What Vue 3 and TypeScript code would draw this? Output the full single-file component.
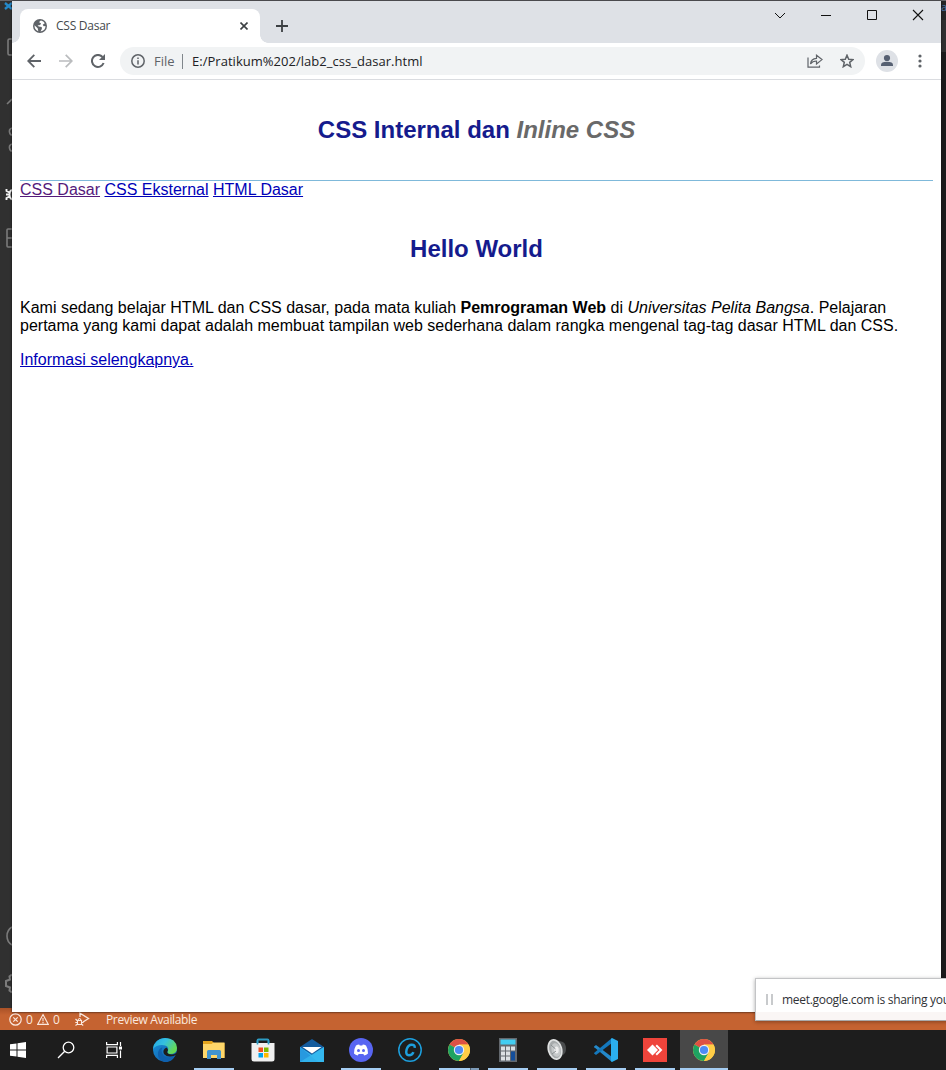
<script setup lang="ts">
interface Task {
  name: string
  state?: 'open' | 'stacked' | 'active'
}

const tasks: Task[] = [
  { name: 'edge' },
  { name: 'files', state: 'open' },
  { name: 'store' },
  { name: 'mail' },
  { name: 'discord', state: 'open' },
  { name: 'circle-c' },
  { name: 'chrome', state: 'stacked' },
  { name: 'calculator', state: 'open' },
  { name: 'speaker', state: 'open' },
  { name: 'vscode', state: 'open' },
  { name: 'anydesk', state: 'open' },
  { name: 'chrome', state: 'active' },
]
</script>

<template>
  <div class="desktop">
    <div class="editor">
      <svg class="activity" width="12" height="1008" viewBox="0 0 12 1008" fill="none" stroke="#7b7b7b" stroke-width="1.6">
        <path d="M5 2l7 6M5 8l7-6" stroke="#2489ca" stroke-width="2.4" />
        <path d="M12 38H9.500Q8 38 8 39.500V52.500Q8 54 9.500 54H12" />
        <path d="M7 103l5-5" />
        <path d="M12 127q-3 1-2.500 4q.5 3 2.500 3M12 143q-3 1-2.500 4q.5 3 2.500 3" />
        <path d="M12 189q-2.500 1-2.500 4.500t2.500 5M6.500 188v2l3 1.500M6 193.500h3.500M6.500 199v-2l3-1.500" stroke="#f2f2f2" stroke-width="1.900" />
        <path d="M12 228H8Q7 228 7 229V245Q7 246 8 246H12M7 237h5" />
        <path d="M12 926q-5 3-5 9t5 9" />
        <path d="M12 973.500l-2.500 2 .5 3-4 1.500v5l4 1.500-.5 3 2.500 2" stroke-width="2" />
      </svg>
      <div class="edge-strip"><span>at</span></div>
      <div class="status">
        <svg width="13" height="13" viewBox="0 0 13 13" fill="none" stroke="currentColor" stroke-width="1.2">
          <circle cx="6.500" cy="6.500" r="5.700" /><path d="M4.300 4.300l4.400 4.400M8.700 4.300l-4.400 4.400" />
        </svg>
        <span class="zero">0</span>
        <svg class="warn" width="12" height="13" viewBox="0 0 13 13" fill="none" stroke="currentColor" stroke-width="1.200">
          <path d="M6.500 1.200L12.300 11.800H.7ZM6.500 4.800v3.600M6.500 9.300v1.200" />
        </svg>
        <span class="zero">0</span>
        <svg class="debug" width="15" height="14" viewBox="0 0 15 14" fill="none" stroke="currentColor" stroke-width="1.300">
          <path d="M5 5V1.200L13.500 6.500 8 10" />
          <path d="M2.500 8.500h4v4h-4ZM.5 7l2 2M.3 10.500h2.200M.5 13.500l2-1.500M6.500 10.500h2M6.500 12l1.700 1.500M3 8q1.500-3 3 0" stroke-width="1.100" />
        </svg>
        <span class="preview">Preview Available</span>
      </div>
    </div>

    <main class="window">
      <div class="tabstrip">
        <div class="tab">
          <svg class="globe" width="14" height="14" viewBox="0 0 14 14">
            <circle cx="7" cy="7" r="7" fill="#5f6368" />
            <path d="M8 1.400Q6.200 2 6.300 3.500L8 4.300 7.200 6 4.500 6.400 5.800 7.600 8.700 8 8.900 9.700 7.500 12.500Q12.500 11.700 12.500 7L10.700 7.300 9.700 5.800 11.800 4.300Q10.700 2 8 1.400ZM1.500 6.300L4.700 9.300 5.300 12.200Q1.300 10.600 1.500 6.300Z" fill="#fff" />
          </svg>
          <span class="tab-title">CSS Dasar</span>
          <svg class="tab-close" width="8" height="8" viewBox="0 0 8 8" stroke="#3c4043" stroke-width="1.600"><path d="M.5.5l7 7M7.500.5l-7 7" /></svg>
        </div>
        <svg class="plus" width="12" height="12" viewBox="0 0 12 12" stroke="#3c4043" stroke-width="1.800"><path d="M6 0v12M0 6h12" /></svg>
        <div class="controls">
          <svg width="46" height="28" viewBox="0 0 46 28" fill="none" stroke="#111"><path d="M18 12l5 5 5-5" /></svg>
          <svg width="46" height="28" viewBox="0 0 46 28" fill="none" stroke="#111"><path d="M18 14.500h10" /></svg>
          <svg width="46" height="28" viewBox="0 0 46 28" fill="none" stroke="#111"><path d="M18.500 9.500h9v9h-9z" /></svg>
          <svg width="46" height="28" viewBox="0 0 46 28" fill="none" stroke="#111" stroke-width="1.100"><path d="M18 9l10 10M28 9L18 19" /></svg>
        </div>
      </div>

      <div class="toolbar">
        <svg class="back" width="14" height="14" viewBox="0 0 14 14" fill="none" stroke="#5f6368" stroke-width="1.800"><path d="M14 7H1.500M7.300.8L1.200 7l6.100 6.200" /></svg>
        <svg class="forward" width="14" height="14" viewBox="0 0 14 14" fill="none" stroke="#babcbe" stroke-width="1.700"><path d="M0 7h12.500M6.700.8L12.800 7l-6.100 6.200" /></svg>
        <svg class="reload" width="14" height="14" viewBox="0 0 14 14"><path d="M12.600 9A6 6 0 1 1 11.500 3" fill="none" stroke="#5f6368" stroke-width="2" /><path d="M14 0v6H8z" fill="#5f6368" /></svg>
        <div class="omnibox">
          <svg class="info" width="14" height="14" viewBox="0 0 14 14" fill="none" stroke="#5f6368" stroke-width="1.500"><circle cx="7" cy="7" r="6.200" /><path d="M7 6.200v4.200M7 3.400v1.500" /></svg>
          <span class="scheme">File</span>
          <span class="url">E:/Pratikum%202/lab2_css_dasar.html</span>
          <svg class="share" width="16" height="14" viewBox="0 0 16 14" fill="none" stroke="#5f6368" stroke-width="1.200"><path d="M1 3.500V13.200H12.500V11.500M3.500 10Q4 4.500 9.500 4.300V1.200L15 5.600 9.500 10V7Q5.500 7 3.500 10Z" /></svg>
          <svg class="star" width="14" height="14" viewBox="0 0 14 14" fill="none" stroke="#5f6368" stroke-width="1.500"><path d="M7 1.200L8.700 5.200 13 5.600 9.700 8.400 10.700 12.700 7 10.400 3.300 12.700 4.300 8.400 1 5.600 5.300 5.200Z" /></svg>
        </div>
        <svg class="profile" width="22" height="22" viewBox="0 0 22 22"><circle cx="11" cy="11" r="11" fill="#dee1e6" /><circle cx="11" cy="8" r="3.100" fill="#566072" /><path d="M5 16v-1.200Q5 11.800 11 11.800T17 14.800V16Z" fill="#566072" /></svg>
        <svg class="menu" width="4" height="14" viewBox="0 0 4 14" fill="#5f6368"><circle cx="2" cy="2" r="1.600" /><circle cx="2" cy="7" r="1.600" /><circle cx="2" cy="12" r="1.600" /></svg>
      </div>

      <article class="page">
        <header><h1>CSS Internal dan <i>Inline CSS</i></h1></header>
        <nav><a class="visited">CSS Dasar</a> <a>CSS Eksternal</a> <a>HTML Dasar</a></nav>
        <h2>Hello World</h2>
        <p>Kami sedang belajar HTML dan CSS dasar, pada mata kuliah <b>Pemrograman Web</b> di <i>Universitas Pelita Bangsa</i>. Pelajaran<br>pertama yang kami dapat adalah membuat tampilan web sederhana dalam rangka mengenal tag-tag dasar HTML dan CSS.</p>
        <a>Informasi selengkapnya.</a>
      </article>
    </main>

    <div class="sharing">
      <span class="grip"></span>
      <span class="sharing-text">meet.google.com is sharing you</span>
    </div>

    <footer class="taskbar">
      <div class="system">
        <svg width="16" height="16" viewBox="0 0 16 16" fill="#fff"><path d="M0 2.300L6.500 1.400V7.500H0ZM7.500 1.200L16 0V7.500H7.500ZM0 8.500H6.500V14.600L0 13.700ZM7.500 8.500H16V16L7.500 14.800Z" /></svg>
      </div>
      <div class="system">
        <svg width="18" height="18" viewBox="0 0 18 18" fill="none" stroke="#fff" stroke-width="1.300"><circle cx="11.500" cy="6.500" r="5.300" /><path d="M7.700 10.300L1 17" /></svg>
      </div>
      <div class="system">
        <svg width="16" height="16" viewBox="0 0 16 16" fill="none" stroke="#fff" stroke-width="1.200"><path d="M.6 0v2.600h10.800V0M.6 16v-2.600h10.800V16M1.100 5h9.800v6H1.100zM14.500 0v4M14.500 8.500V16" /><path d="M13 4.500h3v3h-3z" fill="#fff" stroke="none" /></svg>
      </div>

      <div v-for="(task, index) in tasks" :key="index" class="task" :class="task.state">
        <svg v-if="task.name === 'edge'" width="24" height="24" viewBox="0 0 24 24">
          <defs>
            <linearGradient id="edge-top" x1="0" y1="0" x2="1" y2=".5"><stop offset="0" stop-color="#22a5e7" /><stop offset=".5" stop-color="#35c1df" /><stop offset="1" stop-color="#64da55" /></linearGradient>
            <linearGradient id="edge-base" x1="0" y1="0" x2="1" y2="1"><stop offset="0" stop-color="#1695dd" /><stop offset="1" stop-color="#1354a2" /></linearGradient>
          </defs>
          <path d="M0 12A12 12 0 0 1 24 12Q24 15 21.500 16L22.500 17.500A12 12 0 0 1 0 12Z" fill="url(#edge-base)" />
          <path d="M0 11Q1 1 12 0Q23 0 24 10Q24 16 17 16Q13 15.500 15 13Q16.500 7 9 7Q3 7 0 11Z" fill="url(#edge-top)" />
          <path d="M9.500 9.500Q7 13.500 11 18Q16 21.500 22 18Q18 25 11 24Q3 20 5.500 13Q7 9.500 9.500 9.500Z" fill="#0f60ad" />
          <path d="M13.500 9.500Q16 12 14.200 13.800Q14.500 16.500 19 16.400L22.500 16 21.500 17.800Q14.500 20 11 16Q9 11.500 13.500 9.500Z" fill="#1d1d1d" />
        </svg>

        <svg v-else-if="task.name === 'files'" width="22" height="18" viewBox="0 0 22 18">
          <path d="M0 0h9l2 2h10.500v15H0z" fill="#e5a51e" /><path d="M0 3h8.500l2-1.500h11V17H0z" fill="#ffd76a" />
          <path d="M4 18V10.500Q4 9 5.500 9h11Q18 9 18 10.500V18h-4v-4H8v4z" fill="#4294cf" />
        </svg>

        <svg v-else-if="task.name === 'store'" width="24" height="24" viewBox="0 0 24 24">
          <path d="M6.500 6V2.500Q6.500 1.500 7.500 1.500h9q1 0 1 1V6" fill="none" stroke="#2d9cc4" stroke-width="1.800" />
          <path d="M.5 5h23v16q0 2.500-2.500 2.500H3Q.5 23.500.5 21z" fill="#f0f0f0" />
          <path d="M6.500 5V2.500M17.500 5V2.500M6.500 5v1.500M17.500 5v1.500" stroke="#2d9cc4" stroke-width="1.600" />
          <path d="M7.500 9.500H12V14H7.500z" fill="#f25022" /><path d="M13 9.500h4.500V14H13z" fill="#7fba00" /><path d="M7.500 15H12v4.500H7.500z" fill="#00a4ef" /><path d="M13 15h4.500v4.500H13z" fill="#ffb900" />
        </svg>

        <svg v-else-if="task.name === 'mail'" width="24" height="23" viewBox="0 0 24 23">
          <path d="M0 8L12 0l12 8v15H0z" fill="#145b9d" /><path d="M0 8l12 8 12-8v15H0z" fill="#31b3ee" /><path d="M0 8l18 15H0z" fill="#2799df" /><path d="M0 23L24 8v15z" fill="#36baf0" opacity=".7" /><path d="M2.500 8h19L12 14.500z" fill="#fff" />
        </svg>

        <svg v-else-if="task.name === 'discord'" width="24" height="24" viewBox="0 0 24 24">
          <circle cx="12" cy="12" r="12" fill="#5865f2" />
          <path d="M7 7.500Q8.500 6.600 10.200 6.500L10.700 7.500H13.300L13.800 6.500Q15.500 6.600 17 7.500Q19.300 11 19 15.500Q17.500 17 15.300 17.400L14.300 15.900H9.700L8.700 17.400Q6.500 17 5 15.500Q4.700 11 7 7.500Z" fill="#fff" />
          <circle cx="9.500" cy="12.500" r="1.500" fill="#5865f2" /><circle cx="14.500" cy="12.500" r="1.500" fill="#5865f2" />
        </svg>

        <svg v-else-if="task.name === 'circle-c'" width="24" height="24" viewBox="0 0 24 24" fill="none" stroke="#1d9fdd">
          <circle cx="12" cy="12" r="11.200" stroke-width="1.500" /><path d="M16.700 9.800Q17 6.700 13.700 6.700Q10 6.700 8.600 11.500Q7.200 17.300 11 17.300Q14.300 17.300 15.400 14.200" stroke-width="2.500" />
        </svg>

        <svg v-else-if="task.name === 'chrome'" width="22" height="22" viewBox="0 0 22 22">
          <circle cx="11" cy="11" r="11" fill="#ffcd46" />
          <path d="M11 11L1.500 5.500A11 11 0 0 1 20.500 5.500H11Z" fill="#dd5144" />
          <path d="M11 11L1.500 5.500A11 11 0 0 0 11 22L15.700 13.700Z" fill="#1ea362" />
          <path d="M11 5.700H20.600A11 11 0 0 1 11 22L15.600 13.700Z" fill="#ffcd46" />
          <circle cx="11" cy="11" r="5.200" fill="#f1f1f1" /><circle cx="11" cy="11" r="4.100" fill="#4c8bf5" />
        </svg>

        <svg v-else-if="task.name === 'calculator'" width="18" height="24" viewBox="0 0 18 24">
          <path d="M0 0h18v24H0z" fill="#63686e" /><path d="M1.500 1.500h15v5h-15z" fill="#42cdf2" />
          <path d="M2 8.500h4v4H2zM7 8.500h4v4H7zM12 8.500h4v4h-4zM2 13.500h4v4H2zM7 13.500h4v4H7zM2 18.500h4v4H2zM7 18.500h4v4H7z" fill="#dce0e4" /><path d="M12 13.500h4v9h-4z" fill="#134e9b" />
        </svg>

        <svg v-else-if="task.name === 'speaker'" width="20" height="24" viewBox="0 0 20 24">
          <path d="M7 1.500l9 2.500q3 2 3 6.500t-3 6.500l-6 4z" fill="#4b4d4e" /><ellipse cx="8" cy="11.500" rx="6.500" ry="9.800" transform="rotate(-15 8 11.500)" fill="#a7abac" stroke="#e0e2e2" stroke-width="1.700" />
          <ellipse cx="9" cy="12" rx="4.500" ry="7" transform="rotate(-15 9 12)" fill="#c5c8c9" /><ellipse cx="9.500" cy="12" rx="2.200" ry="3.500" fill="#eee" /><path d="M4 7l4.500 4M5 16l4-3" stroke="#8c9193" />
        </svg>

        <svg v-else-if="task.name === 'vscode'" width="24" height="24" viewBox="0 0 24 24">
          <path d="M0 8.500L2 7l16 12v5L.3 9.200z" fill="#2489ca" /><path d="M0 15.500L2 17 18 5V0L.3 14.800z" fill="#1478bd" /><path d="M18 0l6 3v18l-6 3-1-1V1z" fill="#2bafee" />
        </svg>

        <svg v-else width="24" height="24" viewBox="0 0 24 24">
          <path d="M0 0h24v24H0z" fill="#ef443b" /><path d="M9.500 6.500L15 12l-5.500 5.500L4 12z" fill="#fff" /><path d="M13.200 7.200L18 12l-4.800 4.800" fill="none" stroke="#fff" stroke-width="2" />
        </svg>
      </div>
    </footer>
  </div>
</template>

<style>
html, body { margin: 0; overflow: hidden; }
</style>

<style scoped>
* { box-sizing: border-box; }
svg { display: block; flex: none; }
.desktop { position: relative; width: 946px; height: 1070px; overflow: hidden; background: #1d1d1d; font-family: "Open Sans", "Noto Sans", sans-serif; }
.editor { position: absolute; inset: 0 0 40px; background: #303030; border-top: 1px solid #66666b; }
.activity { position: absolute; left: 0; top: 0; }
.edge-strip { position: absolute; right: 0; top: 0; width: 5px; height: 1008px; overflow: hidden; background: linear-gradient(#252526 0 19px, #303031 19px 51px, #1b1b1c 51px); color: #4c78ad; font-size: 11px; line-height: 12px; }
.status { position: absolute; left: 0; right: 0; bottom: 0; height: 22px; padding: 0 9px; display: flex; align-items: center; background: linear-gradient(#a95127, #c56331 7px); color: #fae8df; font-size: 12px; letter-spacing: -.35px; }
.zero { width: 8px; margin-left: 4px; }
.warn { margin-left: 3px; }
.debug { margin-left: 14px; }
.preview { margin-left: 16px; }
.window { position: absolute; left: 12px; top: 1px; width: 929px; height: 1011px; background: #fff; box-shadow: 0 0 2px #111; }
.tabstrip { height: 42px; display: flex; background: #dee1e6; }
.tab { position: relative; width: 240px; height: 34px; margin: 8px 0 0 8px; padding: 0 12px; display: flex; align-items: center; background: #fff; border-radius: 8px 8px 0 0; }
.tab::before, .tab::after { content: ""; position: absolute; bottom: 0; width: 8px; height: 8px; }
.tab::before { left: -8px; background: radial-gradient(circle at 0 0, #dee1e6 7.500px, #fff 8px); }
.tab::after { right: -8px; background: radial-gradient(circle at 100% 0, #dee1e6 7.500px, #fff 8px); }
.globe { margin-left: 1px; }
.tab-title { margin: 0 0 2px 9px; font-size: 12px; color: #45494d; letter-spacing: -.25px; }
.tab-close { margin-left: auto; }
.plus { margin: 19px 0 0 16px; }
.controls { margin-left: auto; display: flex; }
.toolbar { height: 37px; display: flex; align-items: center; padding-left: 15px; border-bottom: 1px solid #dadce0; }
.forward { margin-left: 18px; }
.reload { margin-left: 18px; }
.omnibox { width: 745px; height: 28px; margin-left: 15px; padding: 0 11px; display: flex; align-items: center; border-radius: 14px; background: #f1f3f4; font-size: 13px; line-height: 18px; white-space: nowrap; }
.scheme { width: 29px; margin-left: 9px; border-right: 1px solid #80868b; height: 15px; line-height: 15px; color: #5f6368; }
.url { margin-left: 9px; color: #202124; letter-spacing: .03px; }
.share { margin-left: auto; }
.star { margin-left: 17px; }
.profile { margin-left: 11px; }
.menu { margin-left: 20px; }
.page { padding: 8px; font: 16px/18px "Liberation Sans", Arial, sans-serif; color: #000; }
header { height: 93px; padding-top: 28px; border-bottom: 1px solid #7fb9da; }
h1, h2 { margin: 0; font-size: 24px; line-height: 28px; text-align: center; color: #151b8d; }
h1 i { color: #696969; }
nav { height: 18px; }
h2 { margin: 36px 0; }
p { margin: 0 0 16px; white-space: nowrap; }
a { color: #0000b8; text-decoration: underline; }
.visited { color: #551a7b; }
.sharing { position: absolute; left: 755px; top: 978px; width: 260px; height: 43px; padding-left: 10px; display: flex; align-items: center; border: 1px solid #c3c4c6; border-bottom-color: #aaa; background: linear-gradient(#fff 33px, #faf6f5 33px); box-shadow: 0 1px 4px #0005; white-space: nowrap; }
.grip { width: 7px; height: 11px; border: solid #c8cacc; border-width: 0 2px; }
.sharing-text { margin-left: 9px; font-size: 12px; color: #303236; letter-spacing: -.3px; }
.taskbar { position: absolute; left: -6px; right: 0; bottom: 0; height: 40px; display: flex; background: #1d1d1d; }
.system { width: 48px; height: 40px; display: flex; align-items: center; justify-content: center; }
.system:nth-child(3) { margin-right: 2px; }
.task { position: relative; width: 48px; height: 40px; margin-left: 1px; display: flex; align-items: center; justify-content: center; }
.open::after, .stacked::after, .active::after { content: ""; position: absolute; left: 4px; bottom: 0; width: 40px; height: 2px; background: #a5cdf2; }
.stacked::after { background: linear-gradient(90deg, #a5cdf2 31px, #536373 31px 32px, #7d9bb8 32px); }
.active { background: #484848; }
.active::after { left: 0; width: 48px; }
</style>
